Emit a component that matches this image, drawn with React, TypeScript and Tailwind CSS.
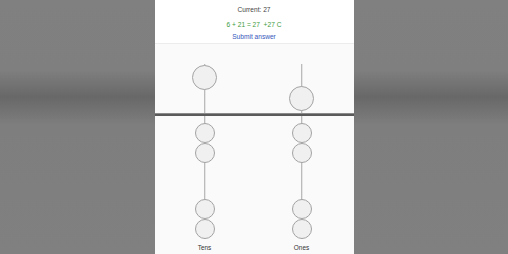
import React from "react";

type Col = { label: string; heavenDown: boolean; earthUp: number };

const cols: Col[] = [
  { label: "Tens", heavenDown: false, earthUp: 2 },
  { label: "Ones", heavenDown: true, earthUp: 2 },
];

const Bead = ({ size }: { size: "lg" | "sm" }) => (
  <div
    className={
      size === "lg"
        ? "relative z-10 w-[25px] h-[25px] rounded-full bg-[#f0f0f0] border border-[#a3a3a3]"
        : "relative z-10 w-[20px] h-[20px] rounded-full bg-[#f0f0f0] border border-[#a3a3a3]"
    }
  />
);

const Rod = ({ top }: { top: number }) => (
  <div
    className="absolute bottom-0 left-1/2 -translate-x-1/2 w-[1.5px] bg-[#a6a6a6]"
    style={{ top }}
  />
);

export default function App() {
  return (
    <div
      className="w-full h-[254px] flex justify-center overflow-hidden bg-[linear-gradient(to_bottom,#808080_0px,#7f7f7f_70px,#686868_97px,#7e7e7e_125px,#808080_254px)]"
      style={{ fontFamily: '"Liberation Sans", Arial, sans-serif' }}
    >
      <div className="w-[199px] h-full flex flex-col bg-[#fafafa]">
        <div className="h-[44px] flex flex-col items-center bg-white border-b border-[#ececec]">
          <div className="mt-[6px] text-[6.6px] leading-[8px] text-[#444]">Current: 27</div>
          <div className="mt-[7px] text-[6.6px] leading-[8px] text-[#3c9b3c] whitespace-pre">6 + 21 = 27  +27 C</div>
          <div className="mt-[4px] text-[6.6px] leading-[8px] text-[#3557bb]">Submit answer</div>
        </div>

        {/* upper deck */}
        <div className="h-[69px] flex pl-[30px] gap-[57px]">
          {cols.map((c) => (
            <div
              key={c.label}
              className={
                c.heavenDown
                  ? "relative w-[40px] flex flex-col items-center justify-end pb-[2px]"
                  : "relative w-[40px] flex flex-col items-center justify-start pt-[21px]"
              }
            >
              <Rod top={20} />
              <Bead size="lg" />
            </div>
          ))}
        </div>

        {/* beam */}
        <div className="h-[3px] bg-[#5a5a5a] border-t border-[#8a8a8a]" />

        {/* lower deck */}
        <div className="flex pl-[30px] gap-[57px]">
          {cols.map((c) => (
            <div key={c.label} className="w-[40px] flex flex-col items-center">
              <div className="relative flex flex-col items-center pt-[7px]">
                <Rod top={0} />
                {Array.from({ length: c.earthUp }).map((_, i) => (
                  <Bead key={"u" + i} size="sm" />
                ))}
                <div className="h-[36px]" />
                {Array.from({ length: 4 - c.earthUp }).map((_, i) => (
                  <Bead key={"d" + i} size="sm" />
                ))}
              </div>
              <div className="mt-[5px] text-[6.4px] leading-[8px] text-[#333]">{c.label}</div>
            </div>
          ))}
        </div>
      </div>
    </div>
  );
}
